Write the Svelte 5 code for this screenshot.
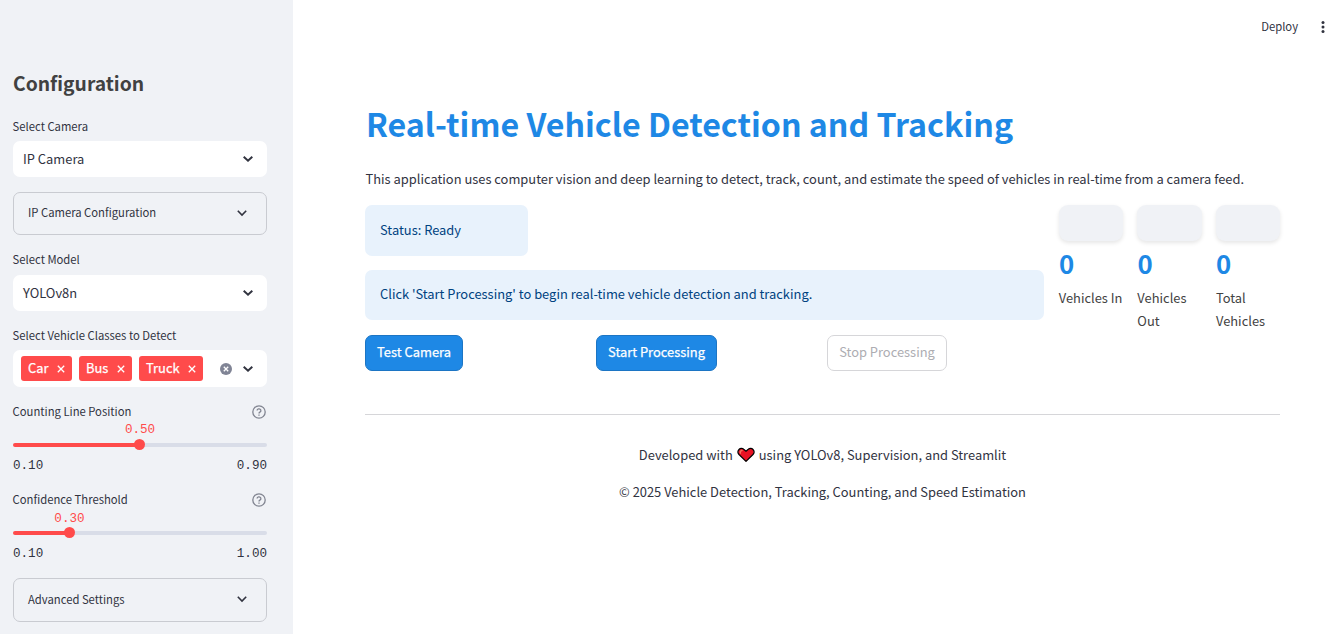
<script>
  const tags = [
    { name: 'Car', width: 51 },
    { name: 'Bus', width: 53 },
    { name: 'Truck', width: 64 }
  ];
  const sliders = [
    { label: 'Counting Line Position', value: '0.50', min: '0.10', max: '0.90', pct: 50 },
    { label: 'Confidence Threshold', value: '0.30', min: '0.10', max: '1.00', pct: 22.222 }
  ];
  const metrics = ['Vehicles In', 'Vehicles Out', 'Total Vehicles'];
</script>

{#snippet chevron()}
  <svg class="chevron" width="18" height="18" viewBox="0 0 18 18"><path d="M4.7 6.8 9 10.7l4.3-3.9" fill="none" stroke="currentColor" stroke-width="2" /></svg>
{/snippet}

{#snippet thinChevron()}
  <svg class="chevron thin" width="18" height="18" viewBox="0 0 18 18"><path d="M4.8 6.8 9 11l4.2-4.2" fill="none" stroke="currentColor" stroke-width="1.6" /></svg>
{/snippet}

<div class="app">
  <aside>
    <h2><span>Configuration</span></h2>

    <div class="label first"><span>Select Camera</span></div>
    <div class="select"><span class="t">IP Camera</span>{@render chevron()}</div>

    <div class="expander"><span class="t">IP Camera Configuration</span>{@render thinChevron()}</div>

    <div class="label model"><span>Select Model</span></div>
    <div class="select"><span class="t">YOLOv8n</span>{@render chevron()}</div>

    <div class="label classes"><span>Select Vehicle Classes to Detect</span></div>
    <div class="select multi">
      <div class="tags">
        {#each tags as tag}
          <div class="tag" style="width: {tag.width}px">
            <span>{tag.name}</span>
            <svg width="8" height="8" viewBox="0 0 8 8"><path d="M.8.8l6.4 6.4M7.2.8.8 7.2" stroke="#fff" stroke-width="1.3" /></svg>
          </div>
        {/each}
      </div>
      <svg class="clear" width="12" height="12" viewBox="0 0 12 12"><circle cx="6" cy="6" r="6" fill="#808495" /><path d="M3.8 3.8l4.4 4.4M8.2 3.8 3.8 8.2" stroke="#fff" stroke-width="1.3" /></svg>
      {@render chevron()}
    </div>

    {#each sliders as s}
      <div class="slider">
        <div class="label head">
          <span>{s.label}</span>
          <svg width="14" height="14" viewBox="0 0 14 14" fill="none" stroke="#808490" stroke-width="1.3"><circle cx="7" cy="7" r="6.2" /><path d="M5.1 5.6a1.9 1.75 0 1 1 2.8 1.5c-.6.4-.9.7-.9 1.3" /><path d="M7 9.4v1.3" /></svg>
        </div>
        <div class="rail" style="--pct: {s.pct}%">
          <span class="value">{s.value}</span>
          <span class="thumb"></span>
        </div>
        <div class="ticks"><span>{s.min}</span><span>{s.max}</span></div>
      </div>
    {/each}

    <div class="expander advanced"><span class="t">Advanced Settings</span>{@render thinChevron()}</div>
  </aside>

  <main>
    <header>
      <span>Deploy</span>
      <svg width="4" height="14" viewBox="0 0 4 14" fill="#31333f"><circle cx="2" cy="2.5" r="1.5" /><circle cx="2" cy="7" r="1.5" /><circle cx="2" cy="11.5" r="1.5" /></svg>
    </header>
    <section class="content">
      <h1><span>Real-time Vehicle Detection and Tracking</span></h1>
      <p class="intro"><span>This application uses computer vision and deep learning to detect, track, count, and estimate the speed of vehicles in real-time from a camera feed.</span></p>
      <div class="columns">
        <div class="left">
          <div class="alert status"><span>Status: Ready</span></div>
          <div class="alert info"><span>Click 'Start Processing' to begin real-time vehicle detection and tracking.</span></div>
          <div class="buttons">
            <div><button class="b1"><span>Test Camera</span></button></div>
            <div><button class="b2"><span>Start Processing</span></button></div>
            <div><button class="b3" disabled><span>Stop Processing</span></button></div>
          </div>
        </div>
        <div class="metrics">
          {#each metrics as m}
            <div class="metric">
              <div class="card"></div>
              <div class="num">0</div>
              <div class="name">{m}</div>
            </div>
          {/each}
        </div>
      </div>
      <hr />
      <footer>
        <p class="f1"><span>Developed with</span>
          <svg width="18" height="16" viewBox="0 0 18 16"><path d="M9 14.4 2 7.5C.8 6.1.8 3.8 2 2.5S5.3 1 6.7 2.3L9 4.2l2.3-1.9C12.7 1 14.8 1.2 16 2.5s1.2 3.6 0 5z" fill="#e81224" stroke="#000" stroke-width="1.2" stroke-linejoin="round" /><path d="M3.5 6.2c-.7-1.2.2-2.8 1.6-2.7" fill="none" stroke="#f4705c" stroke-width="1.4" stroke-linecap="round" /></svg>
          <span>using YOLOv8, Supervision, and Streamlit</span></p>
        <p class="f2"><span>© 2025 Vehicle Detection, Tracking, Counting, and Speed Estimation</span></p>
      </footer>
    </section>
  </main>
</div>

<style>
  :global(body) { margin: 0; background: #fff; }
  * { box-sizing: border-box; }
  .app {
    display: flex;
    width: 1334px;
    height: 634px;
    overflow: hidden;
    color: #31333f;
    font: 12.9px/23px "Noto Sans CJK SC", "Noto Sans", sans-serif;
  }
  h1, h2, p { margin: 0; }
  span { white-space: nowrap; }
  svg { display: block; flex: none; }

  aside { width: 293px; padding: 60px 26px 0 13px; background: #f0f2f6; flex: none; }
  h2 { height: 48px; font-size: 19.3px; line-height: 46px; font-weight: 700; color: #414141; }
  .label { height: 22px; font-size: 11.27px; line-height: 21px; }
  .label.first { margin-top: 8px; height: 25px; }
  .label span { margin-left: -.4px; }
  .select {
    display: flex;
    align-items: center;
    justify-content: space-between;
    height: 36px;
    padding: 0 10px;
    border-radius: 7px;
    background: #fff;
  }
  .t { position: relative; top: -1px; }
  .expander {
    display: flex;
    align-items: center;
    justify-content: space-between;
    height: 43px;
    margin-top: 15px;
    padding: 0 15px 0 14px;
    border: 1px solid #c9cbd1;
    border-radius: 7px;
    font-size: 11.27px;
  }
  .thin { margin-bottom: 2px; }
  .label.model { margin-top: 14px; height: 26px; }
  .label.classes { margin-top: 14px; height: 25px; }
  .multi { height: 37px; padding-left: 8px; justify-content: flex-start; }
  .tags { display: flex; gap: 7px; margin-right: auto; }
  .tag {
    display: flex;
    align-items: center;
    justify-content: space-between;
    height: 25px;
    padding: 0 7px;
    border-radius: 3px;
    background: #ff4b4b;
    color: #fff;
    -webkit-text-stroke: .25px #fff;
  }
  .tag span { position: relative; top: -1px; }
  .clear { margin-right: 7px; }

  .slider { height: 88px; padding-top: 14px; }
  .head { display: flex; justify-content: space-between; height: 22px; padding-right: 1px; }
  .head svg { margin-top: 4px; }
  .rail {
    position: relative;
    height: 4px;
    margin-top: 20px;
    border-radius: 2px;
    background: linear-gradient(to right, #ff4b4b var(--pct), #d9dde8 var(--pct));
  }
  .thumb {
    position: absolute;
    left: var(--pct);
    top: -3.7px;
    width: 11px;
    height: 11px;
    margin-left: -5.7px;
    border-radius: 50%;
    background: #ff4b4b;
  }
  .value, .ticks { font: 12.6px/20px "Liberation Mono", monospace; }
  .value { position: absolute; left: var(--pct); bottom: 7px; transform: translateX(-50%); color: #ff4b4b; }
  .slider + .slider .value { bottom: 6px; }
  .ticks { display: flex; justify-content: space-between; margin-top: 9px; }
  .advanced { height: 44px; margin-top: 15px; }

  main { flex: 1; }
  header {
    display: flex;
    align-items: center;
    justify-content: flex-end;
    gap: 23px;
    height: 54px;
    padding-right: 9px;
    font-size: 11.27px;
  }
  header span { margin-bottom: 2px; }
  .content { width: 915px; margin: 46px 0 0 72px; }
  h1 { height: 60px; padding-left: 1px; font-size: 32.2px; line-height: 46px; font-weight: 700; color: #1e88e5; }
  .intro { height: 45px; padding-left: .5px; line-height: 38px; }
  .columns { display: flex; gap: 14.6px; height: 209px; }
  .left { width: 679px; flex: none; }
  .alert { padding: 13px 15px; border-radius: 7px; background: #e8f2fc; color: #004280; }
  .status { width: 163px; height: 51px; }
  .info { height: 50px; margin-top: 14px; padding-top: 12px; }
  .buttons { display: grid; grid-template-columns: repeat(3, 231px); margin-top: 15px; }
  button {
    height: 36px;
    padding: 0 0 3px;
    border: 1px solid #1c75c4;
    border-radius: 7px;
    background: #1e88e5;
    color: #fff;
    font: inherit;
    -webkit-text-stroke: .25px #fff;
    display: block;
  }
  .b1 { width: 98px; }
  .b2 { width: 121px; }
  .b3 { width: 120px; background: #fff; border-color: #d6d6d9; color: #adadb2; -webkit-text-stroke: 0; }
  .metrics { display: grid; grid-template-columns: repeat(3, 64.4px); gap: 14.2px; }
  .card { height: 36px; border-radius: 9px; background: #f0f2f6; box-shadow: 0 2px 4px rgba(0, 0, 0, .1); }
  .num { height: 45px; padding-left: .3px; font-size: 25.8px; line-height: 43px; font-weight: 700; color: #1e88e5; }
  .name { padding-left: .2px; color: #424242; }
  hr { margin: 0; border: 0; border-top: 1px solid #d6d6d9; }
  footer { padding-top: 28px; color: #31333f; }
  footer p { display: flex; justify-content: center; height: 37px; }
  .f1 svg { margin: 4px 4px 0; }
</style>
